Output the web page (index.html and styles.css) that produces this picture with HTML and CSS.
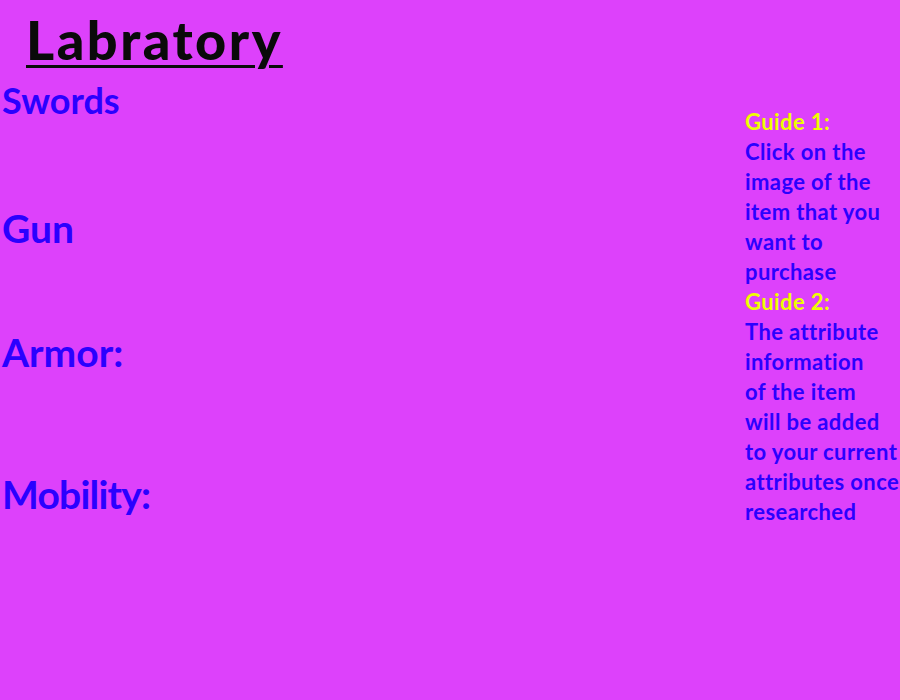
FILE: index.html
```html
<!DOCTYPE html>
<html>
<head>
<meta charset="utf-8">
<link rel="stylesheet" href="styles.css">
</head>
<body>
<div class="page">
  <main class="lab">
    <h1 class="title">Labratory</h1>
    <section class="cat cat-swords"><h2 class="cat-name small">Swords</h2><div class="slot"></div></section>
    <section class="cat cat-gun"><h2 class="cat-name">Gun</h2><div class="slot"></div></section>
    <section class="cat cat-armor"><h2 class="cat-name">Armor:</h2></section>
    <section class="cat cat-mobility"><h2 class="cat-name">Mobility:</h2></section>
  </main>
  <aside class="guide">
    <p class="g-title">Guide 1:</p>
    <p class="g-text">Click on the<br>image of the<br>item that you<br>want to<br>purchase</p>
    <p class="g-title">Guide 2:</p>
    <p class="g-text">The attribute<br>information<br>of the item<br>will be added<br>to your current<br>attributes once<br>researched</p>
  </aside>
</div>
</body>
</html>
```
FILE: styles.css
```css
html, body {
  margin: 0;
  padding: 0;
  background: #dd41fb;
  overflow: hidden;
}
.page {
  display: flex;
  width: 900px;
  height: 700px;
}
.lab {
  flex: 1;
  display: flex;
  flex-direction: column;
  padding-left: 2px;
}
.title {
  margin: 0;
  padding-left: 24px;
  font-family: Lato, sans-serif;
  font-weight: 900;
  font-size: 54px;
  letter-spacing: 2.5px;
  line-height: 80px;
  height: 80px;
  color: #0a0a0a;
  text-decoration: underline;
  text-decoration-thickness: 3px;
  text-underline-offset: 5px;
}
.cat-name {
  margin: 0;
  font-family: Lato, sans-serif;
  font-weight: 700;
  color: #2b00ff;
  font-size: 39px;
  line-height: 44px;
}
.cat-name.small {
  font-size: 36px;
  line-height: 40px;
}
.cat-swords { height: 126px; }
.cat-gun { height: 124px; }
.cat-armor { height: 142px; }
.cat-mobility .cat-name { letter-spacing: -0.8px; }
.guide {
  width: 155px;
  padding-top: 107px;
  font-family: Lato, sans-serif;
  font-weight: 700;
  font-size: 22px;
  letter-spacing: 0.4px;
  line-height: 30px;
  white-space: nowrap;
}
.guide p { margin: 0; }
.g-title { color: #eeff00; }
.g-text { color: #2b00ff; }
```
